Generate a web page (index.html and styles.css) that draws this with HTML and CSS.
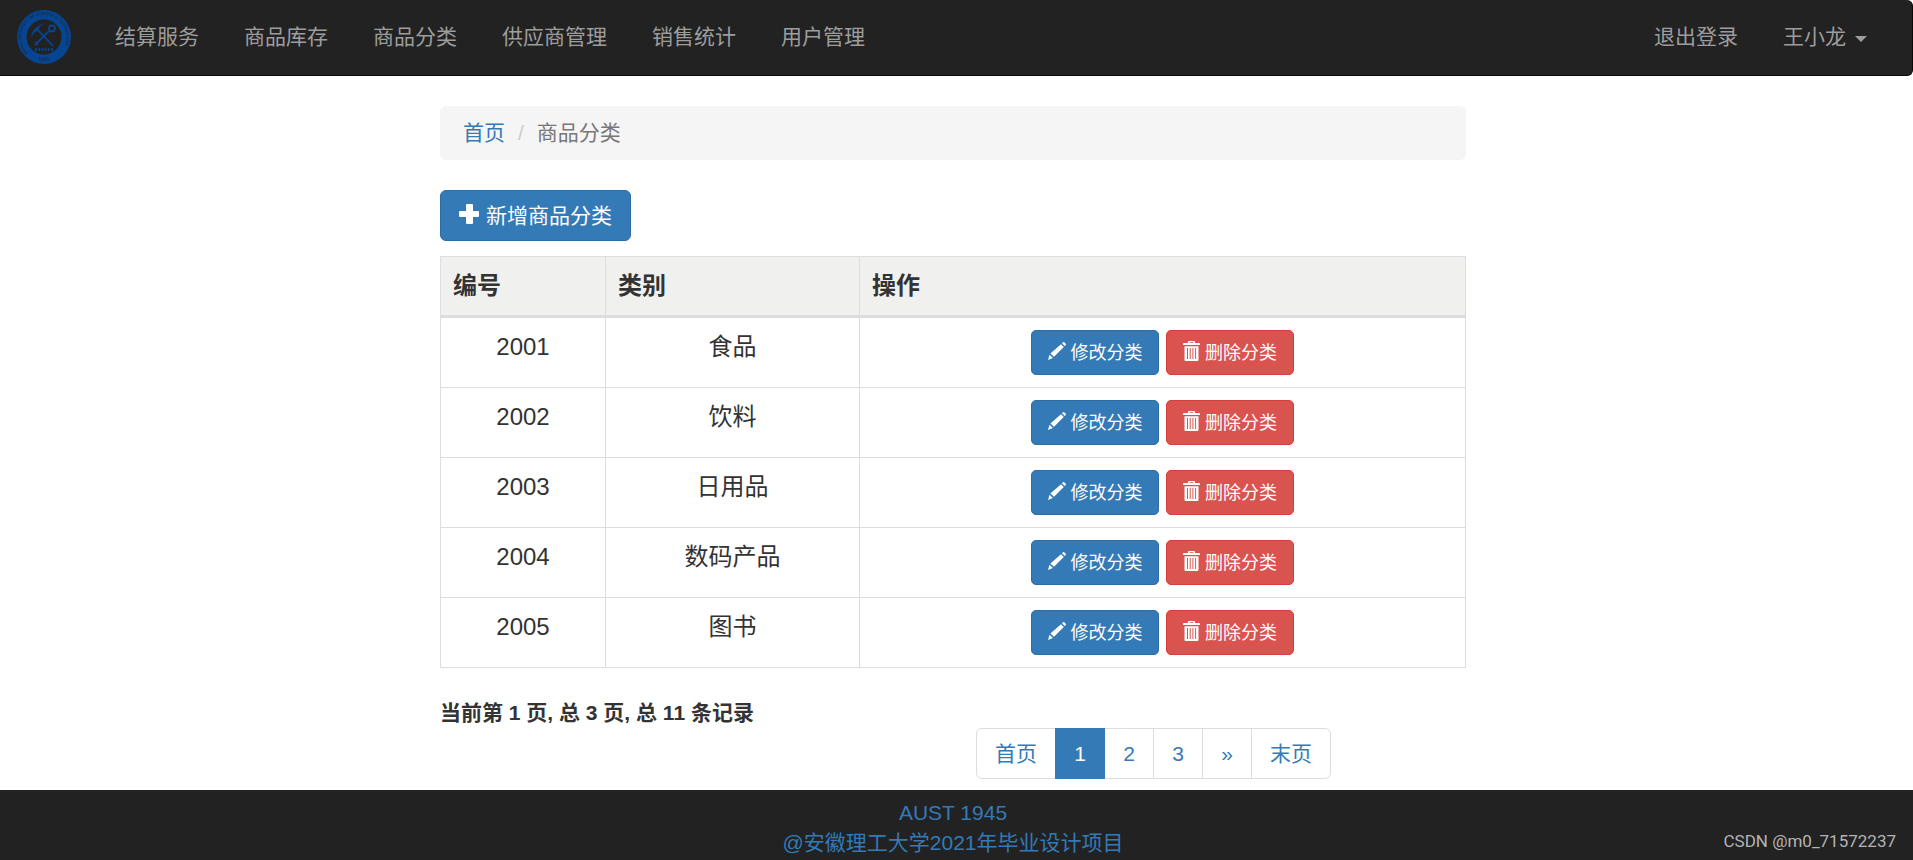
FILE: index.html
```html
<!DOCTYPE html>
<html lang="zh-CN">
<head>
<meta charset="utf-8">
<meta name="viewport" content="width=device-width, initial-scale=1">
<title>商品分类</title>
<link rel="stylesheet" href="styles.css">
</head>
<body>
<svg class="sprite" aria-hidden="true">
  <symbol id="icon-plus" viewBox="0 0 20 20">
    <path d="M8 0h5a1 1 0 0 1 1 1v6h5a1 1 0 0 1 1 1v4a1 1 0 0 1-1 1h-5v6a1 1 0 0 1-1 1H8a1 1 0 0 1-1-1v-6H1a1 1 0 0 1-1-1V8a1 1 0 0 1 1-1h6V1a1 1 0 0 1 1-1z"/>
  </symbol>
  <symbol id="icon-pencil" viewBox="0 0 18 18">
    <path d="M14 1.200l1-.9q.6-.5 1.200 0l1.500 1.500q.5.600 0 1.200l-1 1zM13 2.200l2.800 2.800-9.800 9.800-3.600-3.200zM1.500 12.700l3.400 3.200-4.900 2.100z"/>
  </symbol>
  <symbol id="icon-trash" viewBox="0 0 17 20">
    <path fill-rule="evenodd" d="M5 2V1q0-1 1-1h5q1 0 1 1v1h4q1 0 1 1v1H0V3q0-1 1-1zm1.500 0h4V1.200h-4zM1.500 5.200h14V19q0 1-1 1h-12q-1 0-1-1zM4 7v11h1V7zm2.700 0v11h1V7zm2.700 0v11h1V7zm2.700 0v11h1V7z"/>
  </symbol>
</svg>

<nav class="navbar">
  <a class="brand" href="#" aria-label="AUST">
    <svg class="logo" viewBox="0 0 54 54" aria-hidden="true">
      <defs><path id="ring" d="M11.500 43.500A22.500 22.500 0 1 1 42.500 43.500"/></defs>
      <circle cx="27" cy="27" r="27" fill="#064591"/>
      <circle cx="27" cy="27" r="17.500" fill="#222"/>
      <text class="logo-ring"><textPath href="#ring">ANHUI UNIVERSITY OF SCIENCE &amp; TECHNOLOGY</textPath></text>
      <text class="logo-year" x="27" y="50.500">1945</text>
      <g fill="none" stroke="#064591" stroke-width="1.800">
        <path d="M36 36L19 18"/>
        <path d="M18 35L32 21"/>
        <circle cx="35" cy="18.500" r="3"/>
        <path d="M18 32l3 3" stroke-width="1.500"/>
      </g>
      <path d="M14 27q1-9 13-14-5 4-6 7-4 2-7 7z" fill="#064591"/>
      <!-- row of small motto characters -->
      <path d="M18 39.500h18" stroke="#064591" stroke-width="2.500" stroke-dasharray="2 1.200"/>
    </svg>
  </a>
  <ul class="nav-list">
    <li><a href="#">结算服务</a></li>
    <li><a href="#">商品库存</a></li>
    <li><a href="#">商品分类</a></li>
    <li><a href="#">供应商管理</a></li>
    <li><a href="#">销售统计</a></li>
    <li><a href="#">用户管理</a></li>
  </ul>
  <ul class="nav-list nav-right">
    <li><a href="#">退出登录</a></li>
    <li><a href="#">王小龙<span class="caret"></span></a></li>
  </ul>
</nav>

<main class="content">
  <ol class="breadcrumb">
    <li><a href="#">首页</a></li>
    <li class="current">商品分类</li>
  </ol>

  <button class="btn btn-primary btn-add" type="button"><svg class="icon-plus"><use href="#icon-plus"/></svg>新增商品分类</button>

  <table class="table">
    <thead>
      <tr><th class="col-id">编号</th><th class="col-type">类别</th><th>操作</th></tr>
    </thead>
    <tbody>
      <tr><td>2001</td><td>食品</td><td><div class="actions"><button class="btn btn-sm btn-primary" type="button"><svg class="icon-pencil"><use href="#icon-pencil"/></svg>修改分类</button><button class="btn btn-sm btn-danger" type="button"><svg class="icon-trash"><use href="#icon-trash"/></svg>删除分类</button></div></td></tr>
      <tr><td>2002</td><td>饮料</td><td><div class="actions"><button class="btn btn-sm btn-primary" type="button"><svg class="icon-pencil"><use href="#icon-pencil"/></svg>修改分类</button><button class="btn btn-sm btn-danger" type="button"><svg class="icon-trash"><use href="#icon-trash"/></svg>删除分类</button></div></td></tr>
      <tr><td>2003</td><td>日用品</td><td><div class="actions"><button class="btn btn-sm btn-primary" type="button"><svg class="icon-pencil"><use href="#icon-pencil"/></svg>修改分类</button><button class="btn btn-sm btn-danger" type="button"><svg class="icon-trash"><use href="#icon-trash"/></svg>删除分类</button></div></td></tr>
      <tr><td>2004</td><td>数码产品</td><td><div class="actions"><button class="btn btn-sm btn-primary" type="button"><svg class="icon-pencil"><use href="#icon-pencil"/></svg>修改分类</button><button class="btn btn-sm btn-danger" type="button"><svg class="icon-trash"><use href="#icon-trash"/></svg>删除分类</button></div></td></tr>
      <tr><td>2005</td><td>图书</td><td><div class="actions"><button class="btn btn-sm btn-primary" type="button"><svg class="icon-pencil"><use href="#icon-pencil"/></svg>修改分类</button><button class="btn btn-sm btn-danger" type="button"><svg class="icon-trash"><use href="#icon-trash"/></svg>删除分类</button></div></td></tr>
    </tbody>
  </table>

  <p class="summary">当前第 1 页, 总 3 页, 总 11 条记录</p>

  <ul class="pagination">
    <li><a href="#">首页</a></li>
    <li><a class="active" href="#">1</a></li>
    <li><a href="#">2</a></li>
    <li><a href="#">3</a></li>
    <li><a href="#">»</a></li>
    <li><a href="#">末页</a></li>
  </ul>
</main>

<footer class="footer">
  <a href="#">AUST 1945</a>
  <a href="#">@安徽理工大学2021年毕业设计项目</a>
  <span class="watermark">CSDN @m0_71572237</span>
</footer>
</body>
</html>
```
FILE: styles.css
```css
* {
  box-sizing: border-box;
}

body {
  margin: 0;
  min-height: 100vh;
  display: flex;
  flex-direction: column;
  background: #fff;
  color: #333;
  font-family: "Liberation Sans", "Noto Sans CJK SC", sans-serif;
  font-size: 21px;
  line-height: 30px;
}

ul,
ol {
  margin: 0;
  padding: 0;
  list-style: none;
}

a {
  color: #337ab7;
  text-decoration: none;
}

.sprite {
  display: none;
}

.navbar {
  display: flex;
  align-items: center;
  padding: 0 23px 1px 17px;
  background: #222;
  border-right: 1px solid #080808;
  border-bottom: 1px solid #080808;
  border-radius: 0 6px 6px 0;
}

.brand {
  display: flex;
  margin-right: 22px;
}

.logo {
  width: 54px;
  height: 54px;
}

.logo text {
  fill: #1a2c4a;
  font-family: "Liberation Sans", sans-serif;
  font-size: 5px;
  font-weight: 700;
}

.logo .logo-ring {
  font-size: 4px;
}

.logo .logo-year {
  text-anchor: middle;
}

.nav-list {
  display: flex;
  gap: 1px;
}

.nav-list a {
  display: flex;
  align-items: center;
  padding: 22px;
  gap: 9px;
  color: #9d9d9d;
}

.nav-right {
  margin-left: auto;
}

.caret {
  margin-top: 3px;
  border-top: 6px solid #9d9d9d;
  border-right: 6px solid transparent;
  border-left: 6px solid transparent;
}

.content {
  width: 1026px;
  max-width: 100%;
  margin: 30px 0 11px;
  align-self: center;
}

@media (min-width: 1100px) {
  .content {
    margin-right: 7px;
  }
}

.breadcrumb {
  display: flex;
  padding: 12px 23px;
  margin-bottom: 30px;
  background: #f5f5f5;
  border-radius: 6px;
}

.current {
  color: #777;
}

.current::before {
  content: "/";
  padding: 0 13px;
  color: #ccc;
}

.btn {
  display: inline-flex;
  align-items: center;
  justify-content: center;
  border: 1px solid;
  color: #fff;
  font: inherit;
  cursor: pointer;
}

.btn svg {
  margin-bottom: 3px;
  fill: currentColor;
}

.btn-primary {
  background: #337ab7;
  border-color: #2e6da4;
}

.btn-danger {
  background: #d9534f;
  border-color: #d43f3a;
}

.btn-add {
  height: 51px;
  padding: 0 18px;
  gap: 7px;
  border-radius: 6px;
}

.btn-sm {
  width: 128px;
  height: 45px;
  padding: 0;
  gap: 5px;
  border-radius: 5px;
  font-size: 18px;
}

.icon-plus {
  width: 20px;
  height: 20px;
}

.icon-pencil {
  width: 18px;
  height: 18px;
}

.icon-trash {
  width: 17px;
  height: 20px;
}

.table {
  width: 100%;
  margin-top: 15px;
  border-collapse: collapse;
  table-layout: fixed;
  font-size: 24px;
  line-height: 34px;
}

.table th,
.table td {
  padding: 12px;
  border: 1px solid #ddd;
  text-align: center;
  vertical-align: top;
}

.table th {
  background: #f0f0ee;
  border-bottom-width: 3px;
  text-align: left;
}

.table .col-id {
  width: 165px;
}

.table .col-type {
  width: 254px;
}

.actions {
  display: flex;
  justify-content: center;
  gap: 7px;
}

.summary {
  margin: 30px 0 0;
  font-weight: 700;
}

.pagination {
  display: flex;
  width: max-content;
  margin-left: 536px;
}

.pagination a {
  display: block;
  min-width: 50px;
  padding: 10px 18px 9px;
  border: 1px solid #ddd;
  text-align: center;
}

.pagination li + li {
  margin-left: -1px;
}

.pagination li:first-child a {
  border-radius: 6px 0 0 6px;
}

.pagination li:last-child a {
  border-radius: 0 6px 6px 0;
}

.pagination .active {
  position: relative;
  background: #337ab7;
  border-color: #337ab7;
  color: #fff;
}

.footer {
  position: relative;
  display: flex;
  flex-direction: column;
  align-items: center;
  margin-top: auto;
  padding: 8px 7px 2px 0;
  background: #222;
}

.watermark {
  position: absolute;
  right: 17px;
  bottom: 4px;
  color: #b4b4b4;
  font-family: Roboto, sans-serif;
  font-size: 17px;
}
```
